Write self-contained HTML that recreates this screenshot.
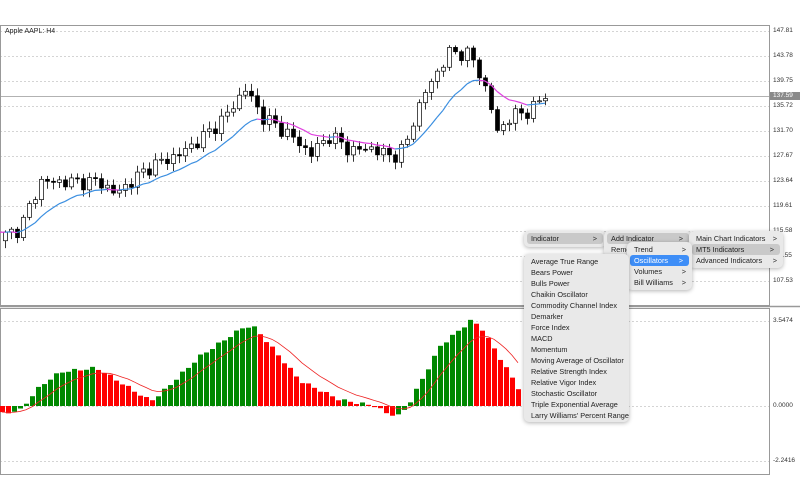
<!DOCTYPE html>
<html><head><meta charset="utf-8"><style>
body{margin:0;width:800px;height:500px;background:#fff;overflow:hidden;font-family:"Liberation Sans",Arial,sans-serif;position:relative}
svg{position:absolute;left:0;top:0}
.lbl{position:absolute;left:773px;font-size:6.5px;color:#333}
.menu{position:absolute;background:#e9e9e9;border-radius:5px;box-shadow:0 1px 4px rgba(0,0,0,.3);font-size:7.3px;color:#222}
.it{position:absolute;left:0;right:0;height:11px;line-height:11px;padding-left:7px;white-space:nowrap}
.it b{position:absolute;right:6px;font-weight:normal}
.hl{background:#c9c9c9;border-radius:3px;left:3px;right:3px;padding-left:4px}
.bl{background:#3e8ef7;color:#fff;border-radius:3px;left:3px;right:3px;padding-left:4px}
</style></head><body>
<svg id="s" width="800" height="500"></svg>
<div style="position:absolute;left:5px;top:28px;font-size:7px;color:#222">Apple AAPL: H4</div>
<div class="lbl" style="top:27px">147.81</div>
<div class="lbl" style="top:52px">143.78</div>
<div class="lbl" style="top:77px">139.75</div>
<div style="position:absolute;left:770px;top:92px;width:30px;height:8px;background:#8a8a8a;color:#fff;font-size:6.5px;line-height:8px;padding-left:3px">137.59</div>
<div class="lbl" style="top:102px">135.72</div>
<div class="lbl" style="top:127px">131.70</div>
<div class="lbl" style="top:152px">127.67</div>
<div class="lbl" style="top:177px">123.64</div>
<div class="lbl" style="top:202px">119.61</div>
<div class="lbl" style="top:227px">115.58</div>
<div class="lbl" style="top:252px">111.55</div>
<div class="lbl" style="top:277px">107.53</div>
<div class="lbl" style="top:317px">3.5474</div>
<div class="lbl" style="top:402px">0.0000</div>
<div class="lbl" style="top:457px">-2.2416</div>

<div class="menu" style="left:524px;top:231px;width:82px;height:16px"><div class="it hl" style="top:2px">Indicator<b>&gt;</b></div></div>
<div class="menu" style="left:604px;top:231px;width:88px;height:26px"><div class="it hl" style="top:2px">Add Indicator<b>&gt;</b></div><div class="it" style="top:13px">Remo</div></div>
<div class="menu" style="left:689px;top:231px;width:94px;height:37px"><div class="it" style="top:2px">Main Chart Indicators<b>&gt;</b></div><div class="it hl" style="top:13px">MT5 Indicators<b>&gt;</b></div><div class="it" style="top:24px">Advanced Indicators<b>&gt;</b></div></div>
<div class="menu" style="left:627px;top:242px;width:65px;height:48px"><div class="it" style="top:2px">Trend<b>&gt;</b></div><div class="it bl" style="top:13px">Oscillators<b>&gt;</b></div><div class="it" style="top:24px">Volumes<b>&gt;</b></div><div class="it" style="top:35px">Bill Williams<b>&gt;</b></div></div>
<div class="menu" style="left:524px;top:254px;width:105px;height:168px">
<div class="it" style="top:2px">Average True Range</div>
<div class="it" style="top:13px">Bears Power</div>
<div class="it" style="top:24px">Bulls Power</div>
<div class="it" style="top:35px">Chaikin Oscillator</div>
<div class="it" style="top:46px">Commodity Channel Index</div>
<div class="it" style="top:57px">Demarker</div>
<div class="it" style="top:68px">Force Index</div>
<div class="it" style="top:79px">MACD</div>
<div class="it" style="top:90px">Momentum</div>
<div class="it" style="top:101px">Moving Average of Oscillator</div>
<div class="it" style="top:112px">Relative Strength Index</div>
<div class="it" style="top:123px">Relative Vigor Index</div>
<div class="it" style="top:134px">Stochastic Oscillator</div>
<div class="it" style="top:145px">Triple Exponential Average</div>
<div class="it" style="top:156px">Larry Williams' Percent Range</div>
</div>
<script>
var s=document.getElementById('s'),h='';
function L(x1,y1,x2,y2,c,w,d){h+='<line x1="'+x1+'" y1="'+y1+'" x2="'+x2+'" y2="'+y2+'" stroke="'+c+'" stroke-width="'+(w||1)+'"'+(d?' stroke-dasharray="2,2"':'')+'/>';}
[31,56,81,106,131,156,181,206,231,256,281].forEach(function(y){L(0,y+.5,769,y+.5,'#aaa',.6,1)});
[321,406,461].forEach(function(y){L(0,y+.5,769,y+.5,'#aaa',.6,1)});
L(0,96.5,800,96.5,'#999',.8);
h+='<rect x="0.5" y="25.5" width="769" height="280" fill="none" stroke="#999"/>';
h+='<rect x="0.5" y="308.5" width="769" height="166" fill="none" stroke="#999"/>';
L(0,306.5,800,306.5,'#999',1.5);
function py(p){return 31+(147.81-p)/4.03*25}
function interp(a,x){for(var i=1;i<a.length;i++)if(x<=a[i][0]){var t=(x-a[i-1][0])/(a[i][0]-a[i-1][0]);return a[i-1][1]+t*(a[i][1]-a[i-1][1]);}return a[a.length-1][1];}
var A=[[0,114.5],[20,116],[40,123.5],[100,123.5],[115,121.5],[150,126],[180,128],[205,131],[225,134],[245,138.5],[262,134],[290,131],[310,128],[330,131],[350,128.5],[370,129],[392,127.5],[405,129],[412,133],[425,138],[440,142],[450,144.5],[470,144],[482,140],[490,136],[497,131.5],[510,134],[530,135],[545,137.5]];
var cl=[],xs=[],prev=114;
for(var i=0;i<91;i++){var x=5+6*i;var n=Math.sin(i*2.3)*0.8+Math.cos(i*1.7)*0.5;var c=interp(A,x)+n;var o=prev;prev=c;xs.push(x);cl.push(c);
var hi=Math.max(o,c)+0.3+Math.abs(Math.sin(i*3.1))*0.9,lo=Math.min(o,c)-0.3-Math.abs(Math.cos(i*2.7))*0.9;
L(x+.5,py(hi),x+.5,py(lo),'#000',.8);
var t=py(Math.max(o,c)),b=py(Math.min(o,c));if(b-t<1)b=t+1;
h+='<rect x="'+(x-1.5)+'" y="'+t+'" width="4" height="'+(b-t)+'" fill="'+(c>=o?'#fff':'#000')+'" stroke="#000" stroke-width=".7"/>';}
var ma=[],m=cl[0];for(i=0;i<cl.length;i++){m=m+(cl[i]-m)*0.14;ma.push(m);}
for(i=1;i<ma.length;i++){L(xs[i-1],py(ma[i-1]),xs[i],py(ma[i]),cl[i]>=ma[i]?'#3a8ee0':'#e040e0',1.2);}
L(0,py(ma[0]),xs[0],py(ma[0]),'#e040e0',1.2);
var B=[[0,-8],[20,-4],[40,20],[60,34],[95,38],[100,36],[150,5],[160,12],[200,50],[245,80],[255,78],[300,25],[340,6],[375,0],[385,-7],[400,-10],[410,5],[440,60],[470,85],[480,80],[520,15]];
var bx=[],bv=[],pv=null;
for(var x=2;x<=522;x+=6){var v=interp(B,x)+Math.sin(x*.7)*1.5;bx.push(x);bv.push(v);var col=(pv===null||v<pv)?'#f00':'#080';pv=v;
var y0=406,y1=406-v;h+='<rect x="'+(x-2)+'" y="'+Math.min(y0,y1)+'" width="5" height="'+Math.max(1,Math.abs(v))+'" fill="'+col+'"/>';}
var sg=bv[0],pts=[];for(i=0;i<bv.length;i++){sg=sg+(bv[i]-sg)*0.22;pts.push(bx[i]+','+(406-sg));}
h+='<polyline points="'+pts.join(' ')+'" fill="none" stroke="#e22" stroke-width=".8"/>';
s.innerHTML=h;
</script>
</body></html>
